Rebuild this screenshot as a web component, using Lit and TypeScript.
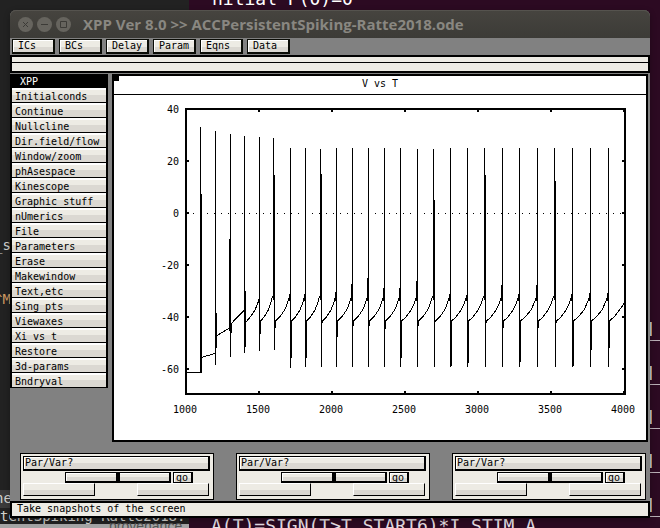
import { LitElement, html, css, svg } from "lit";
import { customElement, property } from "lit/decorators.js";

const TOOLBAR = ["ICs", "BCs", "Delay", "Param", "Eqns", "Data"];

const MENU = [
  "Initialconds", "Continue", "Nullcline", "Dir.field/flow", "Window/zoom",
  "phAsespace", "Kinescope", "Graphic stuff", "nUmerics", "File",
  "Parameters", "Erase", "Makewindow", "Text,etc", "Sing pts",
  "Viewaxes", "Xi vs t", "Restore", "3d-params", "Bndryval",
];

/** One action potential in plot units: column, peak, trough, optional neighbour strokes. */
interface Spike {
  x: number;
  top: number;
  bottom: number;
  before?: number; // top of the upstroke one column earlier
  double?: number; // where a second full-length stroke begins
  after: number; // end of the recovery stroke one column later
}

const SPIKES: Spike[] = [
  { x: 259, top: 137, bottom: 350, before: 299, after: 333 },
  { x: 273, top: 138, bottom: 349, double: 175, after: 327 },
  { x: 290, top: 148, bottom: 367, before: 294, after: 357 },
  { x: 305, top: 148, bottom: 366, before: 294, after: 357 },
  { x: 320, top: 149, bottom: 366, double: 174, after: 322 },
  { x: 336, top: 148, bottom: 366, before: 292, after: 336 },
  { x: 352, top: 148, bottom: 366, before: 284, after: 325 },
  { x: 368, top: 148, bottom: 366, before: 278, after: 325 },
  { x: 384, top: 148, bottom: 366, before: 288, after: 328 },
  { x: 400, top: 148, bottom: 366, before: 288, after: 357 },
  { x: 417, top: 149, bottom: 366, before: 281, after: 325 },
  { x: 433, top: 149, bottom: 366, double: 200, after: 321 },
  { x: 450, top: 148, bottom: 366, before: 294, after: 365 },
  { x: 467, top: 148, bottom: 366, before: 295, after: 362 },
  { x: 484, top: 148, bottom: 366, double: 175, after: 322 },
  { x: 502, top: 148, bottom: 366, before: 285, after: 327 },
  { x: 519, top: 148, bottom: 366, before: 294, after: 361 },
  { x: 537, top: 148, bottom: 366, before: 285, after: 327 },
  { x: 554, top: 148, bottom: 366, double: 181, after: 322 },
  { x: 572, top: 148, bottom: 366, before: 294, after: 365 },
  { x: 590, top: 148, bottom: 366, before: 293, after: 349 },
  { x: 608, top: 148, bottom: 366, before: 293, after: 347 },
];

const RAMP: [number, number][] = [[0, 321], [0.3, 317], [0.65, 310], [0.8, 305], [0.93, 300], [1, 296]];

const vline = (x: number, a: number, b: number) => `M${x + 0.5} ${a}V${b}`;

function tracePath(): string {
  const p: string[] = [
    // onset: resting level and the first four spikes
    "M187 372.5H201", vline(200, 127, 373), vline(201, 194, 373),
    "M202 357.5L206 356L215 353.5",
    vline(215, 131, 365), vline(216, 313, 348),
    "M217 335.5L222 332.5L229 328.5",
    vline(229, 239, 331), vline(230, 134, 357), vline(231, 323, 333),
    "M231 324L236 318.5L244 310.5",
    vline(244, 136, 353), vline(245, 291, 347),
    "M246 322L251 316L255 310L259 300",
  ];
  SPIKES.forEach((s, i) => {
    const shifted = s.double !== undefined;
    if (shifted) {
      p.push(vline(s.x, s.top, 300), vline(s.x + 1, s.double!, s.bottom + 1));
    } else {
      p.push(vline(s.x, s.top, s.bottom + 1));
    }
    if (s.before) p.push(vline(s.x - 1, s.before, 301));
    const start = s.x + (shifted ? 2 : 1);
    p.push(vline(start, 320, s.after + 1));
    const next = SPIKES[i + 1];
    if (next) {
      const span = next.x - start;
      p.push("M" + RAMP.map(([t, y]) => `${start + 0.5 + t * (span - 1)} ${y}`).join("L"));
    } else {
      p.push("M609.5 321L615 316L621 308L625 302");
    }
  });
  return p.join("");
}

@customElement("voltage-plot")
export class VoltagePlot extends LitElement {
  static styles = css`
    :host { display: block; background: #fff; }
    svg { display: block; width: 100%; height: auto; }
    .trace { fill: none; stroke: #000; stroke-width: 1; shape-rendering: crispEdges; }
    .frame { fill: none; stroke: #000; stroke-width: 2; shape-rendering: crispEdges; }
    .zero { stroke: #000; stroke-width: 1; stroke-dasharray: 1 6; shape-rendering: crispEdges; }
    text { font: 10px "DejaVu Sans Mono", monospace; fill: #000; }
    .left { text-anchor: end; }
    .below { text-anchor: middle; }
  `;

  render() {
    const ys = [40, 20, 0, -20, -40, -60].map((v, i) => ({ v, y: 109 + i * 52 }));
    const xs = [1000, 1500, 2000, 2500, 3000, 3500, 4000].map((v, i) => ({ v, x: 186 + i * 73 }));
    return html`<svg viewBox="114 95 532 345" role="img" aria-label="V vs T">
      <rect class="frame" x="186" y="109" width="439" height="285"></rect>
      <line class="zero" x1="193" y1="213.5" x2="624" y2="213.5"></line>
      ${ys.map(({ v, y }) => svg`
        <path class="frame" d="M187 ${y}H189M622 ${y}H624"></path>
        <text class="left" x="179" y=${y + 4}>${v}</text>`)}
      ${xs.map(({ v, x }) => svg`
        <path class="frame" d="M${x} 109V112M${x} 391V394"></path>
        <text class="below" x=${x - 1} y="413">${v}</text>`)}
      <path class="trace" d=${tracePath()}></path>
    </svg>`;
  }
}

@customElement("param-slider")
export class ParamSlider extends LitElement {
  @property() name = "";

  static styles = css`
    :host {
      display: flex; flex-direction: column; flex: 1; max-width: 194px; box-sizing: border-box;
      height: 47px; padding: 2px; border: 1px solid #000; background: #edebe4;
    }
    button {
      box-sizing: border-box; margin: 0; padding: 0; border-radius: 0; color: #000;
      font: 10px/10px "DejaVu Sans Mono", monospace; text-align: left;
      background: linear-gradient(#edebe4 50%, #dbd8d2 50%);
    }
    .pick {
      height: 15px; padding-left: 1px; border: 1px solid #000; border-width: 1px 2px 2px 1px;
      box-shadow: inset 1px 1px #fff; margin-right: 1px;
    }
    .middle { display: flex; gap: 2px; height: 12px; padding-left: 42px; }
    .track {
      appearance: none; box-sizing: border-box; width: 106px; height: 11px; margin: 0; align-self: flex-end;
      border: 1px solid #000; border-width: 1px 2px 2px 1px; box-shadow: inset 1px 1px #fff;
      background: linear-gradient(#edebe4 50%, #dbd8d2 50%);
    }
    .track::-webkit-slider-thumb { appearance: none; width: 4px; height: 8px; border: 0; border-radius: 0; background: #000; }
    .go {
      width: 20px; height: 11px; align-self: flex-end; padding-left: 2px; line-height: 7px;
      border: 1px solid #000; border-right-width: 2px; box-shadow: inset 1px 1px #fff;
    }
    .ends { display: flex; justify-content: space-between; padding-right: 2px; }
    .end {
      width: 72px; height: 13px; border: 1px solid #000; border-top-color: #fff; border-left-color: #fff;
    }
  `;

  render() {
    return html`
      <button class="pick">Par/Var?</button>
      <div class="middle">
        <input class="track" type="range" min="0" max="100" value="50" aria-label=${this.name} />
        <button class="go">go</button>
      </div>
      <div class="ends">
        <button class="end" aria-label="Minimum"></button>
        <button class="end" aria-label="Maximum"></button>
      </div>
    `;
  }
}

@customElement("app-root")
export class AppRoot extends LitElement {
  static styles = css`
    :host {
      display: block; position: relative; box-sizing: border-box; min-height: 100vh; padding: 10px;
      overflow: hidden; background: #2c0a22; font: 10px/12px "DejaVu Sans Mono", monospace; color: #000;
    }
    .editor, .panel, .behind, .rail { position: absolute; }
    .editor { left: 0; top: 0; bottom: 0; width: 189px; background: #222; }
    .panel { left: 0; bottom: 0; width: 189px; height: 4px; background: #a5a5a5; }
    .active { position: absolute; left: 0; top: 490px; width: 20px; height: 18px; background: #3b3b3b; }
    .behind { white-space: pre; font-size: 18px; line-height: 20px; color: #e4dee2; }
    .above { left: 212px; top: -11px; color: #fff; }
    .below { left: 211px; top: 516px; }
    .small { font-size: 14px; line-height: 16px; color: #d2d2ce; }
    .file { left: 0; top: 508px; }
    .ne { left: -5px; top: 490px; }
    .us { left: -6px; top: 237px; }
    .em { left: -6px; top: 291px; color: #d09a62; }
    .prov { left: 109px; top: 518px; font-family: "Liberation Sans", sans-serif; color: #555; }
    .rail { right: 0; top: 322px; width: 10px; display: grid; row-gap: 25px; }
    .mark { box-sizing: border-box; height: 19px; border-bottom: 1px solid #b9afb6; }
    .mark::before {
      content: ""; display: block; width: 2px; height: 14px;
      background: linear-gradient(90deg, #a9cbd4 50%, #c98d5d 50%);
    }

    .window {
      position: relative; display: flex; flex-direction: column; background: #818181;
      border-radius: 6px 6px 0 0; box-shadow: 0 2px 6px rgba(0, 0, 0, 0.3);
    }
    .titlebar {
      display: flex; align-items: center; gap: 4px; height: 28px; padding-left: 8px;
      background: linear-gradient(#46443f, #3c3b37); border-radius: 6px 6px 0 0;
      box-shadow: inset 0 1px #55534e;
    }
    .title {
      margin: 0 0 0 8px; font: bold 15px/20px "Open Sans", "Noto Sans", sans-serif; color: #898781;
      white-space: nowrap;
    }
    .control { width: 15px; height: 15px; padding: 0; border: 0; border-radius: 50%; background: #66645e; }
    .control svg { display: block; }
    .glyph { fill: none; stroke: #3c3b37; stroke-width: 1; }

    button.raised {
      box-sizing: border-box; width: 43px; height: 15px; margin: 0; padding: 0 0 0 5px; text-align: left;
      font: inherit; color: #000; border: 1px solid #0a0c06; border-right-width: 2px; border-radius: 0;
      border-bottom-width: 2px;
      box-shadow: inset 1px 1px #fff; background: linear-gradient(#edebe4 60%, #dbd8d2 60%);
    }
    .toolbar { display: flex; gap: 4px; height: 17px; padding: 1px 2px 0; box-sizing: border-box; }
    .command {
      display: flex; flex-direction: column; box-sizing: border-box; height: 18px; border: 2px solid #000;
      background: #edebe4;
    }
    .command::before { content: ""; height: 5px; border-bottom: 1px solid #000; }
    .work { display: flex; align-items: flex-start; gap: 4px; padding: 1px 2px 0 0; }
    .menu {
      display: flex; flex-direction: column; flex: none; width: 98px; padding: 0 2px 0 2px;
      box-sizing: border-box; background: #000;
    }
    .heading { margin: 0; padding: 2px 0 0 8px; height: 12px; font: inherit; color: #fff; }
    .item {
      box-sizing: border-box; height: 15px; margin: 0; padding: 2px 0 0 3px; border: 0; border-radius: 0;
      border-top: 2px solid #fff; border-bottom: 1px solid #000; text-align: left; font: inherit;
      line-height: 10px; color: #000; background: linear-gradient(#edebe4 45%, #dbd8d2 45%);
    }
    .graph { flex: 1; min-width: 0; border: 2px solid #000; background: #fff; }
    .caption {
      position: relative; margin: 0; height: 19px; padding-top: 2px; box-sizing: border-box;
      border-bottom: 1px solid #000; text-align: center; font: inherit;
    }
    .caption::before { content: ""; position: absolute; left: 0; top: 0; width: 5px; height: 5px; background: #000; }
    .sliders { display: flex; justify-content: space-between; gap: 22px; padding: 11px 4px 1px 10px; }
    .status {
      box-sizing: border-box; height: 17px; padding: 0 5px; border: 2px solid #000; background: #edebe4;
    }
  `;

  render() {
    return html`
      <div class="editor"><div class="active"></div></div>
      <div class="behind above">nitial P(0)=0</div>
      <div class="behind below">A(T)=SIGN(T&gt;T_START6)*I_STIM_A</div>
      <div class="behind small us">_s</div>
      <div class="behind small em">^M</div>
      <div class="behind small ne">ne</div>
      <div class="behind small file">tentSpiking-Ratte2018.</div>
      <div class="panel"></div>
      <div class="behind small prov">provenance</div>
      <div class="rail">${[0, 1, 2, 3, 4].map(() => html`<div class="mark"></div>`)}</div>

      <main class="window">
        <header class="titlebar">
          <button class="control" aria-label="Close">
            <svg width="15" height="15"><path class="glyph" d="M5 5L10 10M10 5L5 10"></path></svg>
          </button>
          <button class="control" aria-label="Minimize">
            <svg width="15" height="15"><path class="glyph" d="M4 7.5H11"></path></svg>
          </button>
          <button class="control" aria-label="Maximize">
            <svg width="15" height="15"><path class="glyph" d="M4.5 4.5H10.5V10.5H4.5Z"></path></svg>
          </button>
          <h1 class="title">XPP Ver 8.0 &gt;&gt; ACCPersistentSpiking-Ratte2018.ode</h1>
        </header>
        <div class="toolbar">${TOOLBAR.map((t) => html`<button class="raised">${t}</button>`)}</div>
        <div class="command"></div>
        <div class="work">
          <nav class="menu">
            <h2 class="heading">XPP</h2>
            ${MENU.map((t) => html`<button class="item">${t}</button>`)}
          </nav>
          <section class="graph">
            <h2 class="caption">V vs T</h2>
            <voltage-plot></voltage-plot>
          </section>
        </div>
        <div class="sliders">
          ${["First", "Second", "Third"].map((n) => html`<param-slider name="${n} parameter"></param-slider>`)}
        </div>
        <div class="status" role="status">Take snapshots of the screen</div>
      </main>
    `;
  }
}
